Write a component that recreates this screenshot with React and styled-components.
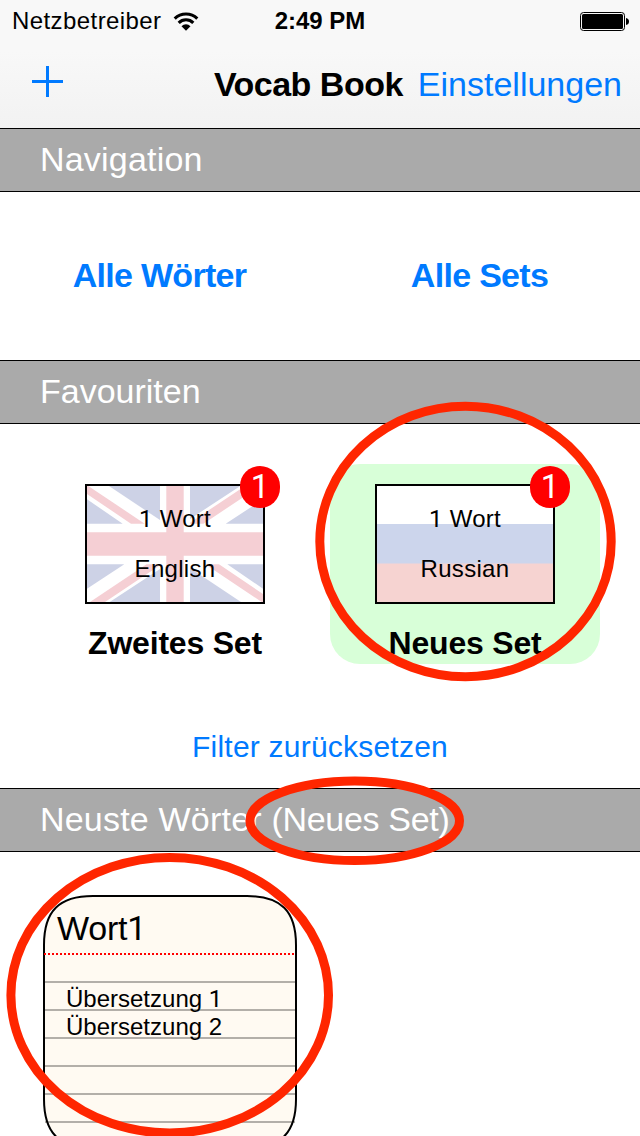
import React from 'react';
import styled, { createGlobalStyle } from 'styled-components';

const GlobalStyle = createGlobalStyle`
  *, *::before, *::after { box-sizing: border-box; }
  html, body { margin: 0; padding: 0; background: #fff; }
  body { overflow: hidden; }
  button { border: 0; background: none; padding: 0; margin: 0; font: inherit; color: inherit; }
`;

const Screen = styled.div`
  position: relative;
  width: 640px;
  height: 1136px;
  overflow: hidden;
  background: #fff;
  color: #000;
  font-family: 'Liberation Sans', Arial, sans-serif;
  display: flex;
  flex-direction: column;
`;

const Header = styled.header`
  height: 128px;
  flex: none;
  background: linear-gradient(#f8f8f8 0, #f8f8f8 40%, #f2f2f2 100%);
`;

const StatusBar = styled.div`
  display: grid;
  grid-template-columns: 1fr auto 1fr;
  align-items: center;
  height: 42px;
  padding: 0 11px 0 12px;
  font-size: 24px;
  line-height: 42px;
`;

const Carrier = styled.div`
  display: flex;
  align-items: center;
  gap: 11px;
  letter-spacing: 0.42px;
`;

const Clock = styled.div`
  margin-right: 1px;
  font-weight: 700;
`;

const BatterySlot = styled.div`
  display: flex;
  justify-content: flex-end;
`;

const NavBar = styled.nav`
  display: flex;
  align-items: center;
  height: 86px;
  padding: 0 18px 2px 32px;
  font-size: 34px;
`;

const AddButton = styled.button`
  display: flex;
  margin: 0 auto 5px 0;
`;

const Title = styled.h1`
  margin: 0 15px 0 0;
  font-size: 34px;
  font-weight: 700;
  letter-spacing: -0.5px;
`;

const SettingsButton = styled.button`
  color: #007aff;
`;

const SectionBar = styled.h2`
  flex: none;
  margin: 0;
  height: 64px;
  padding: 0 40px 2px;
  border: solid #000;
  border-width: 1px 0;
  background: #aaa;
  color: #fff;
  font-size: 34px;
  font-weight: 400;
  line-height: 60px;
  letter-spacing: ${(p) => p.$tracking || 0}px;
`;

const FilterName = styled.span`
  letter-spacing: -0.3px;
`;

const Links = styled.div`
  flex: none;
  display: grid;
  grid-template-columns: 1fr 1fr;
  height: 168px;
  padding-bottom: 2px;
`;

const LinkButton = styled.button`
  padding-right: 1px;
  color: #007aff;
  font-size: 34px;
  font-weight: 700;
  letter-spacing: -0.7px;
`;

const Favourites = styled.div`
  flex: none;
  height: 364px;
  padding: 40px 40px 0;
  display: flex;
  flex-direction: column;
  align-items: center;
`;

const SetGrid = styled.div`
  display: grid;
  grid-template-columns: 270px 270px;
  gap: 20px;
`;

const SetTile = styled.div`
  height: 200px;
  padding-top: 20px;
  border-radius: 30px;
  background: ${(p) => (p.$selected ? '#d8ffd8' : 'transparent')};
  display: flex;
  flex-direction: column;
  align-items: center;
`;

const FlagBox = styled.div`
  position: relative;
  width: 180px;
  height: 120px;
  padding-top: 8px;
  border: 2px solid #000;
  background: #fff;
`;

const FlagArt = styled.svg`
  position: absolute;
  left: 0;
  top: 0;
`;

const FlagLine = styled.div`
  position: relative;
  font-size: 24px;
  line-height: 50px;
  text-align: center;
  letter-spacing: 0.3px;
`;

const One = styled.span`
  font-family: Roboto, 'Liberation Sans', sans-serif;
`;

const Badge = styled.div`
  position: absolute;
  right: -17px;
  top: -20px;
  width: 40px;
  height: 42px;
  border-radius: 20px;
  background: #f00;
  color: #fff;
  font-family: Roboto, 'Liberation Sans', sans-serif;
  font-size: 33px;
  font-weight: 400;
  line-height: 41px;
  text-align: center;
`;

const SetName = styled.div`
  margin-top: 20px;
  font-size: 32px;
  font-weight: 700;
  line-height: 38px;
  letter-spacing: -0.2px;
`;

const ResetButton = styled.button`
  margin-top: 63px;
  color: #007aff;
  font-size: 30px;
  line-height: 40px;
  letter-spacing: 0.22px;
`;

const Words = styled.div`
  flex: 1;
  padding: 43px 0 0 43px;
`;

const WordCard = styled.article`
  position: relative;
  width: 254px;
  height: 254px;
`;

const CardPaper = styled.svg`
  position: absolute;
  left: 0;
  top: 0;
`;

const Word = styled.div`
  position: relative;
  padding: 12px 0 0 14px;
  font-size: 34px;
  line-height: 42px;
  letter-spacing: -0.2px;
`;

const Translations = styled.div`
  position: relative;
  padding: 36px 0 0 23px;
  font-size: 24px;
  line-height: 27px;
`;

const Marks = styled.svg`
  position: absolute;
  left: 0;
  top: 0;
  pointer-events: none;
`;

const WifiIcon = () => (
  <svg width="26" height="19" viewBox="0 0 26 19">
    <g fill="none" stroke="#000" strokeWidth="3.1">
      <path d="M1.7 6.6A16.2 16.2 0 0 1 24.3 6.6" />
      <path d="M5.7 10.8A10.3 10.3 0 0 1 20.3 10.8" />
    </g>
    <path d="M8.5 14.2A6.4 6.4 0 0 1 17.5 14.2L13 18.7Z" />
  </svg>
);

const BatteryIcon = () => (
  <svg width="49" height="19" viewBox="0 0 49 19">
    <rect x="0.5" y="0.5" width="44" height="18" rx="3" fill="none" stroke="#000" />
    <rect x="2" y="2" width="41" height="15" rx="1.5" />
    <path d="M46 6Q49 6.5 49 9.5T46 13Z" />
  </svg>
);

const PlusIcon = () => (
  <svg width="31" height="31" viewBox="0 0 31 31">
    <path d="M14 0h3v14h14v3H17v14h-3V17H0v-3h14z" fill="#007aff" />
  </svg>
);

const FlagSaltireHalf = () => (
  <>
    <path fill="#cdd2e6" d="M22 0H73V34ZM0 13.3V37.7H35.7ZM0 78.3H37.3L0 102.7ZM22.7 116H73V83Z" />
    <path fill="#f5cfd4" d="M1.3 0H0V8L44 37.7H57.7ZM3 116L59.5 78.3H73V79.3L18 116Z" />
  </>
);

const BritishFlag = () => (
  <FlagArt width="176" height="116" viewBox="0 0 176 116">
    <FlagSaltireHalf />
    <g transform="rotate(180 88 58)">
      <FlagSaltireHalf />
    </g>
    <path fill="#f5cfd4" d="M79.3 0H96.7V46.3H176V69.7H96.7V116H79.3V69.7H0V46.3H79.3Z" />
  </FlagArt>
);

const RussianFlag = () => (
  <FlagArt width="176" height="116" viewBox="0 0 176 116">
    <rect y="38" width="176" height="40" fill="#ccd5ec" />
    <rect y="77.5" width="176" height="38.5" fill="#f6d3d1" />
  </FlagArt>
);

const favourites = [
  { name: 'Zweites Set', language: 'English', Flag: BritishFlag },
  { name: 'Neues Set', language: 'Russian', Flag: RussianFlag, selected: true },
];

const ruleOffsets = [87, 115, 143, 171, 199, 227];

const FavouriteSet = ({ name, language, Flag, selected }) => (
  <SetTile $selected={selected}>
    <FlagBox>
      <Flag />
      <FlagLine><One>1</One> Wort</FlagLine>
      <FlagLine>{language}</FlagLine>
      <Badge>1</Badge>
    </FlagBox>
    <SetName>{name}</SetName>
  </SetTile>
);

export default function App() {
  return (
    <Screen>
      <GlobalStyle />
      <Header>
        <StatusBar>
          <Carrier>
            <span>Netzbetreiber</span>
            <WifiIcon />
          </Carrier>
          <Clock>2:49 PM</Clock>
          <BatterySlot><BatteryIcon /></BatterySlot>
        </StatusBar>
        <NavBar>
          <AddButton aria-label="+"><PlusIcon /></AddButton>
          <Title>Vocab Book</Title>
          <SettingsButton>Einstellungen</SettingsButton>
        </NavBar>
      </Header>

      <SectionBar $tracking={0.2}>Navigation</SectionBar>
      <Links>
        <LinkButton>Alle Wörter</LinkButton>
        <LinkButton>Alle Sets</LinkButton>
      </Links>

      <SectionBar>Favouriten</SectionBar>
      <Favourites>
        <SetGrid>
          {favourites.map((set) => <FavouriteSet key={set.name} {...set} />)}
        </SetGrid>
        <ResetButton>Filter zurücksetzen</ResetButton>
      </Favourites>

      <SectionBar $tracking={0.2}>
        Neuste Wörter <FilterName>(Neues Set)</FilterName>
      </SectionBar>
      <Words>
        <WordCard>
          <CardPaper width="254" height="254" viewBox="0 0 254 254">
            <path
              d="M50 1H204C238 1 253 16 253 50V204C253 238 238 253 204 253H50C16 253 1 238 1 204V50C1 16 16 1 50 1Z"
              fill="#fffaf2"
            />
            {ruleOffsets.map((y) => (
              <path key={y} d={`M2 ${y}H252`} stroke="#b3afa9" strokeWidth="2" />
            ))}
            <path
              d="M50 1H204C238 1 253 16 253 50V204C253 238 238 253 204 253H50C16 253 1 238 1 204V50C1 16 16 1 50 1Z"
              fill="none"
              stroke="#000"
              strokeWidth="2"
            />
            <path
              d="M1 59H252"
              stroke="#f00"
              strokeWidth="2"
              strokeDasharray="2 2"
              shapeRendering="crispEdges"
            />
          </CardPaper>
          <Word>Wort<One>1</One></Word>
          <Translations>
            <div>Übersetzung <One>1</One></div>
            <div>Übersetzung 2</div>
          </Translations>
        </WordCard>
      </Words>

      <Marks width="640" height="1136" viewBox="0 0 640 1136">
        <g fill="none" stroke="#ff2600" strokeWidth="9">
          <ellipse cx="465.5" cy="541.5" rx="145.7" ry="135.2" />
          <ellipse cx="354.7" cy="820.8" rx="104.8" ry="39.7" />
          <ellipse cx="169.7" cy="995.2" rx="158.8" ry="137.8" />
        </g>
      </Marks>
    </Screen>
  );
}
